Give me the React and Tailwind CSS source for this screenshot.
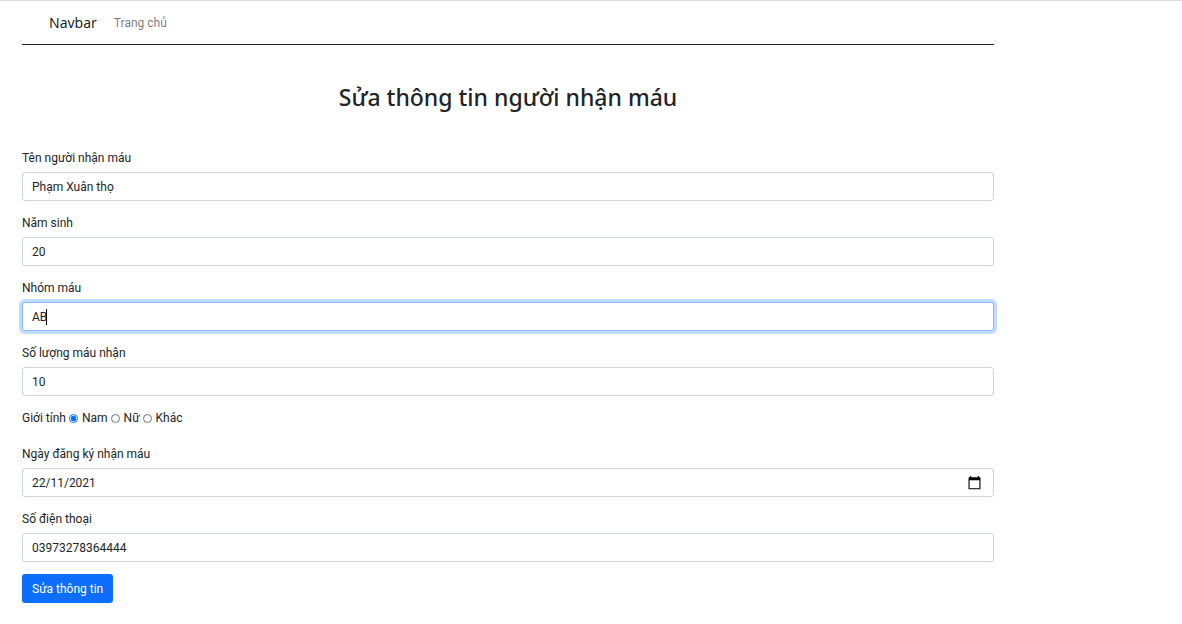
import { useState } from "react";

const inputClass =
  "block h-[29px] w-full rounded-[3px] border border-[#ced4da] bg-white px-[9px] text-xs text-[#212529] outline-none focus:border-[#86b7fe] focus:ring-3 focus:ring-[#c2dbfe]";

function Field({ id, label, children }) {
  return (
    <div className="mb-3">
      <label htmlFor={id} className="mb-1 block pt-px leading-[19px]">
        {label}
      </label>
      <div className="relative">{children}</div>
    </div>
  );
}

function CalendarIcon() {
  return (
    <svg width="13" height="14" viewBox="0 0 13 14" aria-hidden="true">
      <path
        d="M2 0h1.200v1.200h6.600V0H11v1.200h.8c.4 0 .7.3.7.700v10.700c0 .4-.3.7-.7.700H1.200a.7.7 0 0 1-.7-.7V1.900c0-.4.3-.7.7-.7H2zM1.600 4.200v8h9.800v-8z"
        fill="#000"
      />
    </svg>
  );
}

function Gender({ value, label, checked, onChange }) {
  return (
    <label className="flex items-center gap-1">
      <input
        type="radio"
        name="gender"
        value={value}
        checked={checked}
        onChange={onChange}
        className="size-[9px] accent-[#0d6efd]"
      />
      {label}
    </label>
  );
}

export default function App() {
  const [gender, setGender] = useState("nam");
  const [group, setGroup] = useState("AB");

  return (
    <div className="border-t border-[#dcdcdc] bg-white pr-[188px] pl-[22px] font-['Roboto','Noto_Sans',sans-serif] text-xs text-[#212529]">
      <nav className="flex h-11 items-center gap-[17px] border-b border-[#212529] pl-[27px]">
        <a href="#" className="font-['Noto_Sans',sans-serif] text-sm text-black/90">
          Navbar
        </a>
        <a href="#" className="text-xs text-black/55">
          Trang chủ
        </a>
      </nav>

      <h2 className="mt-[35px] mb-[33px] text-center font-['Noto_Sans',sans-serif] text-[23px] leading-[35px] font-medium">
        Sửa thông tin người nhận máu
      </h2>

      <form onSubmit={(e) => e.preventDefault()}>
        <Field id="name" label="Tên người nhận máu">
          <input id="name" type="text" defaultValue="Phạm Xuân thọ" className={inputClass} />
        </Field>
        <Field id="birth" label="Năm sinh">
          <input id="birth" type="text" defaultValue="20" className={inputClass} />
        </Field>
        <Field id="group" label="Nhóm máu">
          <input
            id="group"
            type="text"
            autoFocus
            value={group}
            onChange={(e) => setGroup(e.target.value)}
            className={`${inputClass} caret-transparent`}
          />
          <span
            aria-hidden="true"
            className="pointer-events-none absolute inset-y-0 left-[9px] flex items-center"
          >
            <span className="invisible">{group}</span>
            <span className="h-4 w-px bg-black" />
          </span>
        </Field>
        <Field id="amount" label="Số lượng máu nhận">
          <input id="amount" type="text" defaultValue="10" className={inputClass} />
        </Field>

        <div role="radiogroup" aria-labelledby="gender-label" className="mb-4 flex gap-[3px] pt-px leading-[19px]">
          <span id="gender-label">Giới tính</span>
          <Gender value="nam" label="Nam" checked={gender === "nam"} onChange={() => setGender("nam")} />
          <Gender value="nu" label="Nữ" checked={gender === "nu"} onChange={() => setGender("nu")} />
          <Gender value="khac" label="Khác" checked={gender === "khac"} onChange={() => setGender("khac")} />
        </div>

        <Field id="date" label="Ngày đăng ký nhận máu">
          <input id="date" type="text" defaultValue="22/11/2021" className={inputClass} />
          <button type="button" aria-label="Chọn ngày" className="absolute inset-y-0 right-[13px] flex items-center">
            <CalendarIcon />
          </button>
        </Field>
        <Field id="phone" label="Số điện thoại">
          <input id="phone" type="text" defaultValue="03973278364444" className={inputClass} />
        </Field>

        <button type="submit" className="h-[29px] rounded-[3px] bg-[#0d6efd] px-2.5 text-white">
          Sửa thông tin
        </button>
      </form>
    </div>
  );
}
